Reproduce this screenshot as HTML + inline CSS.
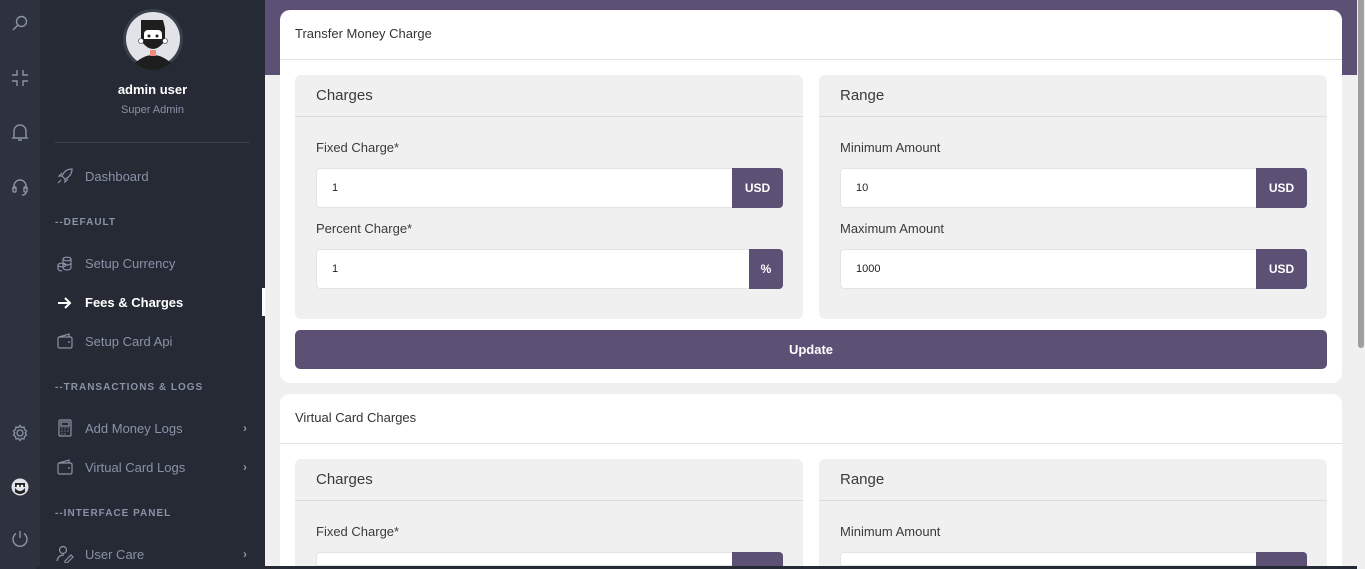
<!DOCTYPE html>
<html><head><meta charset="utf-8"><style>
*{box-sizing:border-box;margin:0;padding:0}
html,body{width:1365px;height:569px;overflow:hidden}
body{background:#f0f0f0;font-family:"Liberation Sans",sans-serif;position:relative}
.ib{position:absolute;left:0;top:0;width:40px;height:569px;background:#2d323e}
.ib svg{position:absolute;left:11px}
.sb{position:absolute;left:40px;top:0;width:225px;height:569px;background:#252a35;color:#8a93a6;overflow:hidden}
.band{position:absolute;left:265px;top:0;width:1092px;height:75px;background:#5c5174}
.scroll{position:absolute;left:1357px;top:0;width:8px;height:569px;background:#f0f0f0}
.thumb{position:absolute;left:1358px;top:0;width:6px;height:348px;background:#9e9e9e;border-radius:0 0 3px 3px}
.card{position:absolute;left:280px;width:1062px;background:#fff;border-radius:10px;overflow:hidden}
.ch{height:50px;border-bottom:1px solid #e2e2e2;padding:0 15px;line-height:48px;font-size:13px;color:#333}
.box{position:absolute;width:508px;background:#f0f0f0;border-radius:6px;overflow:hidden}
.bh{height:42px;border-bottom:1px solid #dcdcdc;padding-left:21px;line-height:42px;font-size:15px;color:#3a3a3a}
.lbl{position:absolute;left:21px;font-size:13px;color:#3a3a3a}
.in{position:absolute;left:21px;width:467px;height:40px;background:#fff;border:1px solid #e4e4e4;border-radius:4px;font-size:11px;color:#222;padding-left:15px;line-height:38px}
.ad{position:absolute;right:-1px;top:-1px;height:40px;background:#5c5174;color:#fff;font-weight:bold;font-size:12px;text-align:center;line-height:40px;border-radius:0 4px 4px 0}
.btn{position:absolute;left:15px;width:1032px;height:39px;background:#5c5174;color:#fff;font-weight:bold;font-size:13px;text-align:center;line-height:39px;border-radius:5px}
.nav{position:absolute;left:45px;font-size:13px;color:#8a93a6}
.sec{position:absolute;left:15px;font-size:10px;letter-spacing:1px;font-weight:bold;color:#8a93a6}
.ic{position:absolute;left:16px}
.chev{position:absolute;left:203px;font-size:12px;font-weight:bold}
</style></head><body>
<div class="ib">
<svg style="top:14px" width="18" height="18" viewBox="0 0 18 18" fill="none" stroke="#8a93a6" stroke-width="1.4"><circle cx="10.5" cy="7.5" r="5"/><path d="M7 11 2 16"/></svg>
<svg style="top:69px" width="18" height="18" viewBox="0 0 18 18" fill="none" stroke="#8a93a6" stroke-width="1.4"><path d="M6 1v5H1M12 1v5h5M6 17v-5H1M12 17v-5h5"/></svg>
<svg style="top:123px" width="18" height="20" viewBox="0 0 18 20" fill="none" stroke="#8a93a6" stroke-width="1.4"><path d="M3 14V8a6 6 0 0 1 12 0v6l1 1H2z M7 17h4"/></svg>
<svg style="top:177px" width="18" height="20" viewBox="0 0 18 20" fill="none" stroke="#8a93a6" stroke-width="1.4"><path d="M3 12V9a6 6 0 0 1 12 0v3"/><rect x="2" y="10" width="3" height="5" rx="1"/><rect x="13" y="10" width="3" height="5" rx="1"/><path d="M15 15q0 3-4 3"/></svg>
<svg style="top:424px" width="18" height="18" viewBox="0 0 18 18" fill="none" stroke="#8a93a6" stroke-width="1.3"><circle cx="9" cy="9" r="3"/><path d="M9 1.5l1.5 2 2.5-.5.5 2.5 2 1.5-1.2 2 1.2 2-2 1.5-.5 2.5-2.5-.5L9 16.5l-1.5-2-2.5.5-.5-2.5-2-1.5L3.7 9 2.5 7l2-1.5.5-2.5 2.5.5z"/></svg>
<svg style="top:478px" width="18" height="18" viewBox="0 0 18 18"><circle cx="9" cy="9" r="8.5" fill="#dfe2e8"/><path d="M4 5h10v4H4z" fill="#222"/><path d="M4 10q5 6 10 0v4q-5 4-10 0z" fill="#222"/><circle cx="7" cy="8" r="1.3" fill="#fff"/><circle cx="11" cy="8" r="1.3" fill="#fff"/></svg>
<svg style="top:530px" width="18" height="18" viewBox="0 0 18 18" fill="none" stroke="#8a93a6" stroke-width="1.4"><path d="M9 1v7M5 3.5a7 7 0 1 0 8 0"/></svg>
</div>
<div class="sb">
<svg style="position:absolute;left:82px;top:8px" width="62" height="62" viewBox="0 0 62 62"><circle cx="31" cy="31" r="30" fill="#3a3f4c"/><circle cx="31" cy="31" r="27" fill="#e1e3e8"/><path d="M13 55q18-16 36 0a27 27 0 0 1-36 0z" fill="#1e1e1e"/><rect x="28" y="42" width="6" height="6" fill="#f08a7a"/><path d="M19 12h22l2 8v12H19z" fill="#1e1e1e"/><rect x="22" y="22" width="18" height="12" rx="4" fill="#fff"/><circle cx="27" cy="28" r="1.5" fill="#222"/><circle cx="35" cy="28" r="1.5" fill="#222"/><path d="M20 34q11 14 22 0v-3H20z" fill="#1e1e1e"/><circle cx="19" cy="33" r="2.5" fill="#fff" stroke="#333" stroke-width=".6"/><circle cx="43" cy="33" r="2.5" fill="#fff" stroke="#333" stroke-width=".6"/></svg>
<div style="position:absolute;left:0;width:225px;top:82px;text-align:center;color:#fff;font-weight:bold;font-size:13px">admin user</div>
<div style="position:absolute;left:0;width:225px;top:104px;text-align:center;font-size:11px">Super Admin</div>
<div style="position:absolute;left:15px;top:142px;width:195px;height:1px;background:#3b4150"></div>
<svg class="ic" style="top:167px" width="18" height="18" viewBox="0 0 18 18" fill="none" stroke="#8a93a6" stroke-width="1.2"><path d="M16 2q-7 0-10 7l3 3q7-3 7-10zM6 9H3l3-3M9 12v3l3-3M5 13l-3 3"/></svg>
<div class="nav" style="top:169px">Dashboard</div>
<div class="sec" style="top:217px">--DEFAULT</div>
<svg class="ic" style="top:255px" width="18" height="18" viewBox="0 0 18 18" fill="none" stroke="#8a93a6" stroke-width="1.2"><ellipse cx="11" cy="4" rx="4" ry="1.8"/><path d="M7 4v9c0 1 2 2 4 2s4-1 4-2V4M7 8c0 1 2 2 4 2s4-1 4-2"/><ellipse cx="6" cy="10" rx="4" ry="1.8"/><path d="M2 10v4c0 1 2 2 4 2"/></svg>
<div class="nav" style="top:256px">Setup Currency</div>
<svg class="ic" style="top:294px" width="18" height="18" viewBox="0 0 18 18" fill="none" stroke="#fff" stroke-width="2"><path d="M2 9h12M9 4l5 5-5 5"/></svg>
<div class="nav" style="top:295px;color:#fff;font-weight:bold">Fees &amp; Charges</div>
<div style="position:absolute;left:222px;top:288px;width:3px;height:28px;background:#fff"></div>
<svg class="ic" style="top:332px" width="18" height="18" viewBox="0 0 18 18" fill="none" stroke="#8a93a6" stroke-width="1.2"><rect x="2" y="5" width="14" height="11" rx="1.5"/><path d="M3 5l10-3v3M12 10h2"/></svg>
<div class="nav" style="top:334px">Setup Card Api</div>
<div class="sec" style="top:382px">--TRANSACTIONS &amp; LOGS</div>
<svg class="ic" style="top:419px" width="18" height="18" viewBox="0 0 18 18" fill="none" stroke="#8a93a6" stroke-width="1.2"><rect x="3" y="1" width="12" height="16" rx="1"/><rect x="5" y="3" width="8" height="4"/><path d="M5.5 9h1M8.5 9h1M11.5 9h1M5.5 12h1M8.5 12h1M11.5 12h1M5.5 15h1M8.5 15h1"/></svg>
<div class="nav" style="top:421px">Add Money Logs</div><div class="chev" style="top:421px">›</div>
<svg class="ic" style="top:458px" width="18" height="18" viewBox="0 0 18 18" fill="none" stroke="#8a93a6" stroke-width="1.2"><rect x="2" y="5" width="14" height="11" rx="1.5"/><path d="M3 5l10-3v3M12 10h2"/></svg>
<div class="nav" style="top:460px">Virtual Card Logs</div><div class="chev" style="top:460px">›</div>
<div class="sec" style="top:508px">--INTERFACE PANEL</div>
<svg class="ic" style="top:545px" width="18" height="18" viewBox="0 0 18 18" fill="none" stroke="#8a93a6" stroke-width="1.2"><circle cx="7" cy="5" r="3.5"/><path d="M1 16q1-6 7-6M9 16l6-6 2 2-6 6H9z"/></svg>
<div class="nav" style="top:547px">User Care</div><div class="chev" style="top:547px">›</div>
</div>
<div class="band"></div>
<div class="scroll"></div><div class="thumb"></div>

<div class="card" style="top:10px;height:373px">
<div class="ch">Transfer Money Charge</div>
<div class="box" style="left:15px;top:65px;height:244px">
<div class="bh">Charges</div>
<div class="lbl" style="top:65px">Fixed Charge*</div>
<div class="in" style="top:93px">1<div class="ad" style="width:51px">USD</div></div>
<div class="lbl" style="top:146px">Percent Charge*</div>
<div class="in" style="top:174px">1<div class="ad" style="width:34px">%</div></div>
</div>
<div class="box" style="left:539px;top:65px;height:244px">
<div class="bh">Range</div>
<div class="lbl" style="top:65px">Minimum Amount</div>
<div class="in" style="top:93px">10<div class="ad" style="width:51px">USD</div></div>
<div class="lbl" style="top:146px">Maximum Amount</div>
<div class="in" style="top:174px">1000<div class="ad" style="width:51px">USD</div></div>
</div>
<div class="btn" style="top:320px">Update</div>
</div>

<div class="card" style="top:394px;height:172px;border-radius:10px 10px 0 0">
<div class="ch">Virtual Card Charges</div>
<div class="box" style="left:15px;top:65px;height:107px;border-radius:6px 6px 0 0">
<div class="bh">Charges</div>
<div class="lbl" style="top:65px">Fixed Charge*</div>
<div class="in" style="top:93px;height:14px;border-radius:4px 4px 0 0"><div class="ad" style="width:51px;height:15px;border-radius:0 4px 0 0"></div></div>
</div>
<div class="box" style="left:539px;top:65px;height:107px;border-radius:6px 6px 0 0">
<div class="bh">Range</div>
<div class="lbl" style="top:65px">Minimum Amount</div>
<div class="in" style="top:93px;height:14px;border-radius:4px 4px 0 0"><div class="ad" style="width:51px;height:15px;border-radius:0 4px 0 0"></div></div>
</div>
</div>
<div style="position:absolute;left:36px;top:566px;width:1321px;height:3px;background:#252a35"></div>
</body></html>
